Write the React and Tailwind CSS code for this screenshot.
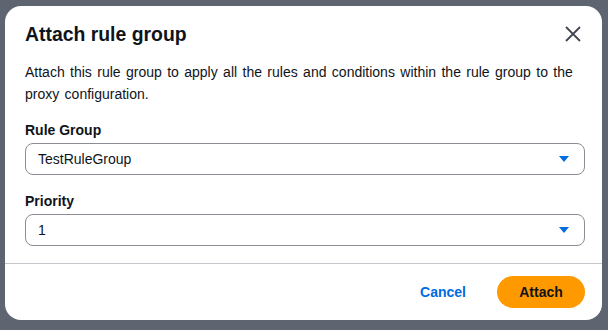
import React from 'react';

const font = { fontFamily: '"Liberation Sans", Arial, sans-serif' };

const Caret = () => (
  <svg width="12" height="8" viewBox="0 0 12 8" className="shrink-0">
    <path d="M1 1h10L6 7z" fill="#006ce0" />
  </svg>
);

const SelectField = ({ label, value }) => (
  <div className="flex flex-col gap-[3px]">
    <label className="text-[14px] leading-[20px] font-bold text-[#0f141a]">{label}</label>
    <div className="h-[32px] flex items-center justify-between rounded-lg border border-[#8c8c94] pl-[12px] pr-[14px]">
      <span className="text-[14px] text-[#0f141a]">{value}</span>
      <Caret />
    </div>
  </div>
);

const App = () => {
  return (
    <div className="w-[608px] h-[330px] bg-[#5f6570] pt-[6px] pl-[5px]" style={font}>
      <div className="w-[597px] h-[314px] bg-white rounded-2xl flex flex-col">
        <div className="pl-5 pr-[17px] pt-4">
          <div className="flex items-center justify-between">
            <h2 className="text-[19.4px] leading-[24px] font-bold text-[#0f141a]">Attach rule group</h2>
            <button className="w-[20px] h-[20px] flex items-center justify-center mr-[2px]">
              <svg width="16" height="16" viewBox="0 0 16 16">
                <path d="M1 1l14 14M15 1L1 15" stroke="#424650" strokeWidth="1.8" fill="none" />
              </svg>
            </button>
          </div>
          <p className="mt-[15px] text-[14px] leading-[22px] text-[#0f141a] [word-spacing:1.5px]">
            Attach this rule group to apply all the rules and conditions within the rule group to the proxy configuration.
          </p>
          <div className="mt-[15px] flex flex-col gap-[16px]">
            <SelectField label="Rule Group" value="TestRuleGroup" />
            <SelectField label="Priority" value="1" />
          </div>
        </div>
        <div className="mt-[17px] border-t border-[#c6c6cd]" />
        <div className="flex-1 flex items-center justify-end gap-3 pr-[17px]">
          <button className="px-[19px] h-[32px] text-[14px] font-bold text-[#006ce0]">Cancel</button>
          <button className="w-[88px] h-[32px] rounded-full bg-[#ff9900] text-[14px] font-bold text-[#0f141a]">Attach</button>
        </div>
      </div>
    </div>
  );
};

export default App;
